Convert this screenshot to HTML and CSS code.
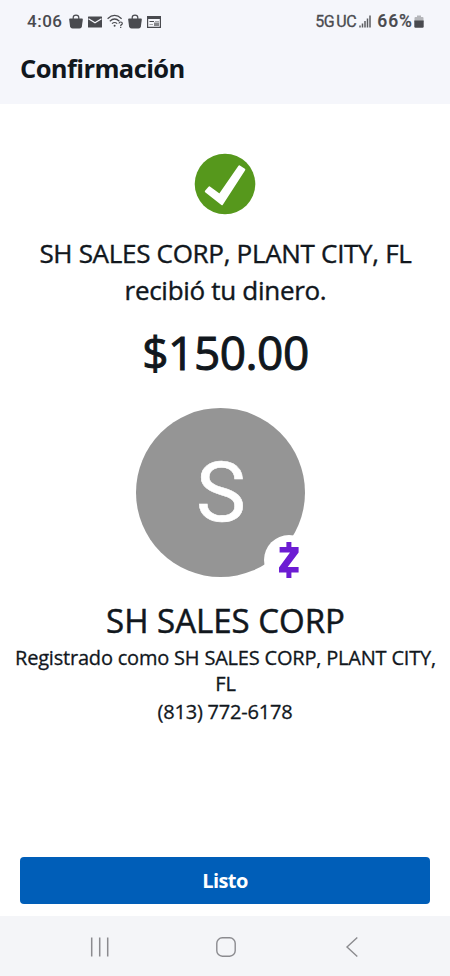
FILE: index.html
```html
<!DOCTYPE html>
<html lang="es">
<head>
    <meta charset="UTF-8">
    <title>Confirmación</title>
    <link rel="stylesheet" href="styles.css">
</head>
<body>
<header class="header">
    <div class="status-bar">
        <span class="time">4:06</span>
        <div class="status-icons">
            <svg width="14" height="15" viewBox="0 0 14 15">
                <path d="M4.200 5V3.500q0-2.400 2.800-2.400t2.800 2.400V5" fill="none" stroke="#494a4f" stroke-width="1.200"/>
                <path d="M1 4.500h12q.9 0 .8.900l-.9 7Q12.600 14.500 10.500 14.500h-7Q1.400 14.500 1.100 12.500l-.9-7q-.1-1 .8-1z" fill="#494a4f"/>
            </svg>
            <svg width="14" height="15" viewBox="0 0 14 15">
                <rect y="2.500" width="14" height="11" rx=".5" fill="#494a4f"/>
                <path d="M.5 4.700 7 8.800l6.500-4.100" fill="none" stroke="#f5f6fb" stroke-width="1.200"/>
            </svg>
            <svg width="16" height="15" viewBox="0 0 16 15">
                <g fill="none" stroke="#494a4f" stroke-width="1.200">
                    <path d="M.6 4.700q7-6.500 14 0M2.800 7.200q4.800-4.400 9.600 0M5 9.600q2.600-2.200 5.200 0"/>
                    <path d="M12 9.500q.2-1.500 1.700-1.500 1.600 0 1.600 1.400 0 .8-.8 1.200t-.8 1.300M13.700 12.800v1.300"/>
                </g>
                <circle cx="7.600" cy="11.800" r="1" fill="#494a4f"/>
            </svg>
            <svg width="14" height="15" viewBox="0 0 14 15">
                <path d="M4.200 5V3.500q0-2.400 2.800-2.400t2.800 2.400V5" fill="none" stroke="#494a4f" stroke-width="1.200"/>
                <path d="M1 4.500h12q.9 0 .8.900l-.9 7Q12.600 14.500 10.500 14.500h-7Q1.400 14.500 1.100 12.500l-.9-7q-.1-1 .8-1z" fill="#494a4f"/>
            </svg>
            <svg width="14" height="15" viewBox="0 0 14 15">
                <path d="M.6 2.600h12.800v10.800H.6z" fill="none" stroke="#494a4f" stroke-width="1.200"/>
                <path d="M0 2h14v3H0z" fill="#494a4f"/>
                <path d="M2.500 7.500H7" stroke="#494a4f"/>
                <path d="M2.500 10.500H6M8 7.500h4" stroke="#a5a6aa"/>
                <path d="M7 8.500h5v3.500H7z" fill="#85868a"/>
            </svg>
        </div>
        <div class="status-right">
            <span class="network">5G<span class="uc">UC</span></span>
            <svg class="signal" width="12" height="13" viewBox="0 0 12 13">
                <path d="M1 12.500V10.500M3.500 12.500V8.500M6 12.500V6M8.500 12.500V3.500M11 12.500V.5" stroke="#5b5c60" stroke-width="1.500"/>
            </svg>
            <span class="percent">66%</span>
            <svg class="battery" width="10" height="13" viewBox="0 0 10 13">
                <path d="M.5 7V3q0-1 1-1H3V.5h4V2h1.500q1 0 1 1v4z" fill="#b5b6ba"/>
                <path d="M.3 5.500h9.400v6q0 1.200-1.200 1.200h-7Q.3 12.700.3 11.500z" fill="#494a4f"/>
            </svg>
        </div>
    </div>
    <h1 class="title">Confirmación</h1>
</header>

<main class="content">
    <svg class="check" width="62" height="62" viewBox="0 0 62 62">
        <circle cx="31" cy="31" r="30.300" fill="#56981c"/>
        <path d="M11.800 38.500 15.300 34.300 25.600 41.800 45.300 13.400 50.300 16.700 28 51.200z" fill="#fff" stroke="#fff" stroke-width="2" stroke-linejoin="round"/>
    </svg>
    <p class="message"><span class="message-name">SH SALES CORP, PLANT CITY, FL</span><br>recibió tu dinero.</p>
    <p class="amount">$150.00</p>
    <div class="avatar">
        <span class="avatar-letter">S</span>
        <div class="badge">
            <svg width="20" height="36" viewBox="0 0 20 36">
                <path d="M7.400 0h5v5h7.200v5.500L8.700 25h10.900v5.500h-7.200V36h-5v-5.500H0V25.500L11 10.500H.6V5h6.800z" fill="#6c1cd3"/>
            </svg>
        </div>
    </div>
    <h2 class="name">SH SALES CORP</h2>
    <p class="details">Registrado como SH SALES CORP, PLANT CITY, FL</p>
    <p class="phone">(813) 772-6178</p>
    <button class="done">Listo</button>
</main>

<nav class="nav-bar">
    <svg width="20" height="20" viewBox="0 0 20 20">
        <path d="M1.700.5v19M9.700.5v19M17.700.5v19" stroke="#8b8b8f" stroke-width="1.500"/>
    </svg>
    <svg width="20" height="20" viewBox="0 0 20 20">
        <rect x=".8" y=".8" width="18.400" height="18.400" rx="5.500" fill="none" stroke="#8b8b8f" stroke-width="1.400"/>
    </svg>
    <svg width="20" height="20" viewBox="0 0 20 20">
        <path d="M15.300.5 5 10l10.300 9.500" fill="none" stroke="#8b8b8f" stroke-width="1.400"/>
    </svg>
</nav>
</body>
</html>
```

FILE: styles.css
```css
* {
    box-sizing: border-box;
    margin: 0;
    padding: 0;
}

body {
    display: flex;
    flex-direction: column;
    width: 450px;
    height: 976px;
    background-color: #fff;
    color: #11171d;
    font-family: "Open Sans", sans-serif;
    overflow: hidden;
}

.header {
    height: 104px;
    background-color: #f5f6fb;
}

.status-bar {
    display: flex;
    align-items: center;
    height: 42px;
    padding: 0 26px 0 27px;
    color: #494a4f;
    font-family: Roboto, sans-serif;
}

.time {
    width: 42px;
    font-size: 17px;
    font-weight: 500;
    letter-spacing: 0.5px;
    white-space: nowrap;
}

.status-icons {
    display: flex;
    gap: 5px;
}

.status-right {
    display: flex;
    align-items: center;
    margin-left: auto;
}

.network {
    font-size: 16px;
    letter-spacing: -0.4px;
    -webkit-text-stroke: 0.3px;
}

.uc {
    margin-left: 2px;
}

.signal {
    margin: 0 6px 0 3px;
}

.percent {
    font-size: 17.5px;
    font-weight: 500;
    letter-spacing: 1px;
    -webkit-text-stroke: 0.2px;
}

.battery {
    margin-left: 1px;
}

.title {
    padding-left: 20px;
    font-size: 25.5px;
    font-weight: 700;
    line-height: 53px;
    letter-spacing: -0.6px;
}

.content {
    display: flex;
    flex: 1;
    flex-direction: column;
    align-items: center;
    padding: 49px 0 12px;
    text-align: center;
}

.message {
    margin-top: 20px;
    padding-left: 1px;
    font-size: 26px;
    line-height: 37px;
    letter-spacing: -0.3px;
    -webkit-text-stroke: 0.4px;
}

.message-name {
    white-space: nowrap;
}

.amount {
    margin-top: 12px;
    padding-left: 1px;
    font-size: 46px;
    line-height: 63px;
    letter-spacing: -0.5px;
    -webkit-text-stroke: 1px;
}

.avatar {
    position: relative;
    display: flex;
    align-items: center;
    justify-content: center;
    width: 169px;
    height: 169px;
    margin: 24px 9px 0 0;
    border-radius: 50%;
    background-color: #959595;
}

.avatar-letter {
    padding-left: 1px;
    color: #fff;
    font-family: Roboto, sans-serif;
    font-size: 84px;
    line-height: 171px;
    -webkit-text-stroke: 0.6px;
}

.badge {
    position: absolute;
    right: -9px;
    bottom: -8px;
    display: flex;
    align-items: center;
    justify-content: center;
    width: 50px;
    height: 50px;
    border-radius: 50%;
    background-color: #fff;
}

.name {
    margin-top: 22px;
    padding-left: 1px;
    font-size: 33px;
    font-weight: 400;
    line-height: 44px;
    -webkit-text-stroke: 0.5px;
}

.details {
    width: 430px;
    margin-top: 2px;
    padding-left: 1px;
    font-size: 20px;
    line-height: 26px;
    letter-spacing: -0.2px;
    -webkit-text-stroke: 0.3px;
}

.phone {
    font-size: 20px;
    line-height: 29px;
    letter-spacing: -0.2px;
    -webkit-text-stroke: 0.3px;
}

.done {
    width: 410px;
    height: 47px;
    margin-top: auto;
    border: none;
    border-radius: 4px;
    background-color: #005eb8;
    color: #fff;
    font-family: inherit;
    font-size: 20px;
    font-weight: 700;
    letter-spacing: -0.6px;
}

.nav-bar {
    display: flex;
    align-items: center;
    justify-content: space-between;
    height: 60px;
    padding: 2px 88px 0 90px;
    background-color: #f4f5f8;
}
```
